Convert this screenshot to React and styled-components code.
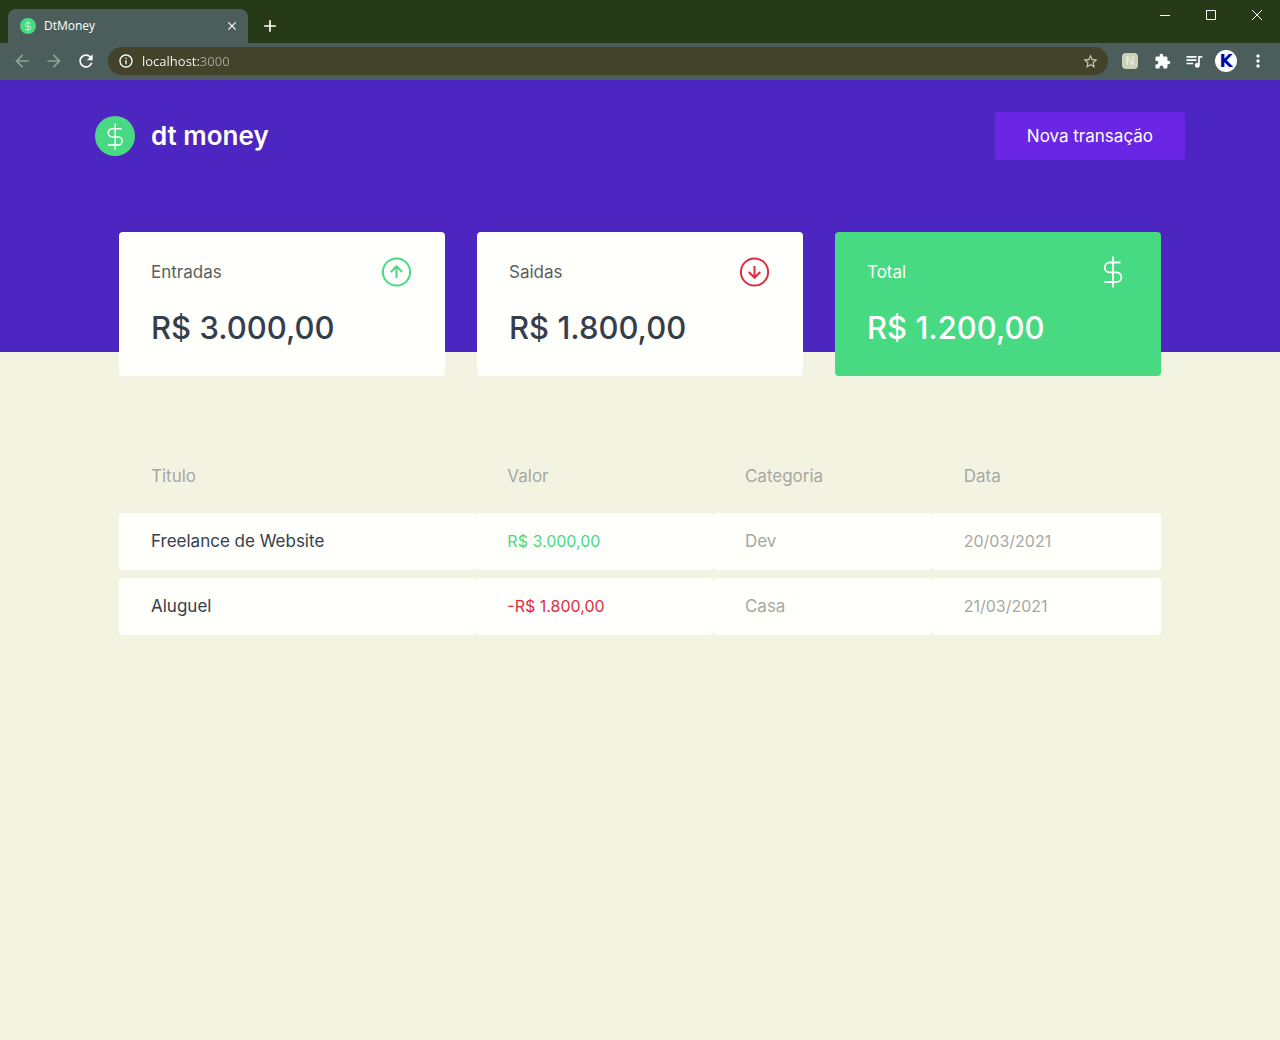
import React from "react";
import styled, { createGlobalStyle } from "styled-components";
import {
  MdArrowBack,
  MdArrowForward,
  MdRefresh,
  MdInfoOutline,
  MdStarBorder,
  MdExtension,
  MdQueueMusic,
  MdMoreVert,
  MdAdd,
  MdClose,
} from "react-icons/md";

const colors = {
  frame: "#263a18",
  toolbar: "#4b5e5c",
  field: "#42432a",
  background: "#f3f3e2",
  header: "#4d25c0",
  button: "#6a26e4",
  green: "#48da82",
  red: "#df2c42",
  title: "#363d4c",
  label: "#5a5e5c",
  muted: "#a6a8a4",
  shape: "#fffffc",
};

const GlobalStyle = createGlobalStyle`
  * { box-sizing: border-box; margin: 0; padding: 0; }
  body {
    background: ${colors.background};
    font-family: Inter, "Open Sans", sans-serif;
    font-size: 17px;
    -webkit-font-smoothing: antialiased;
  }
  button, input { font: inherit; border: 0; background: none; }
  button { cursor: pointer; }
`;

/* Browser window */

const Chrome = styled.div`
  background: ${colors.frame};
  font-family: "Open Sans", "Noto Sans", sans-serif;
  color: #fff;
`;

const TabStrip = styled.div`
  display: flex;
  align-items: flex-start;
  height: 43px;
  padding-left: 8px;
`;

const Tab = styled.div`
  display: flex;
  align-items: center;
  gap: 8px;
  width: 240px;
  height: 34px;
  margin-top: 9px;
  padding: 0 8px 0 12px;
  border-radius: 8px 8px 0 0;
  background: ${colors.toolbar};
  font-size: 12px;
  line-height: 16px;
`;

const TabTitle = styled.span`
  flex: 1;
`;

const IconButton = styled.button`
  display: flex;
  align-items: center;
  justify-content: center;
  flex: none;
  width: ${(p) => p.$width || 32}px;
  height: ${(p) => p.$height || 28}px;
  color: ${(p) => (p.$dim ? "#93a096" : "#fff")};
`;

const NewTab = styled(IconButton)`
  margin: 12px 0 0 8px;
`;

const WindowControls = styled.div`
  display: flex;
  margin-left: auto;
`;

const Toolbar = styled.div`
  display: flex;
  align-items: center;
  padding: 4px 6px 5px;
  background: ${colors.toolbar};
`;

const AddressBar = styled.label`
  display: flex;
  align-items: center;
  flex: 1;
  gap: 8px;
  height: 28px;
  margin: 0 6px;
  padding: 0 2px 0 10px;
  border-radius: 14px;
  background: ${colors.field};
`;

const AddressInput = styled.input`
  flex: 1;
  min-width: 0;
  height: 28px;
  font-size: 13px;
  line-height: 20px;
  outline: 0;
  color: #fff;
  background: linear-gradient(90deg, #fff 58px, #a3a59b 58px);
  background-clip: text;
  -webkit-background-clip: text;
  -webkit-text-fill-color: transparent;
`;

const Extension = styled.span`
  display: flex;
  align-items: center;
  justify-content: center;
  width: 16px;
  height: 16px;
  border-radius: 4px;
  background: #cfd0b8;
  color: #f4f4e6;
  font-size: 12px;
  line-height: 16px;
`;

const Avatar = styled.span`
  display: flex;
  align-items: center;
  justify-content: center;
  width: 22px;
  height: 22px;
  border-radius: 50%;
  background: #fff;
  color: #0505a8;
  font-family: "DejaVu Sans", sans-serif;
  font-size: 17px;
  font-weight: 700;
  line-height: 22px;
`;

/* Page */

const Header = styled.header`
  background: ${colors.header};
`;

const HeaderContent = styled.div`
  display: flex;
  align-items: center;
  justify-content: space-between;
  max-width: 1122px;
  margin: 0 auto;
  padding: 32px 16px 192px;
`;

const Brand = styled.h1`
  display: flex;
  align-items: center;
  gap: 16px;
  color: #fff;
  font-size: 26px;
  font-weight: 600;
  line-height: 40px;
`;

const NewTransaction = styled.button`
  height: 48px;
  padding: 0 32px;
  border-radius: 4px;
  background: ${colors.button};
  color: #fff;
  line-height: 24px;
`;

const Main = styled.main`
  max-width: 1122px;
  margin: 0 auto;
  padding: 0 40px 40px;
`;

const Summary = styled.section`
  display: grid;
  grid-template-columns: repeat(3, 1fr);
  gap: 32px;
  margin-top: -120px;
`;

const Card = styled.article`
  padding: 24px 32px;
  border-radius: 4px;
  background: ${(p) => (p.$highlight ? colors.green : colors.shape)};
  color: ${(p) => (p.$highlight ? "#fff" : colors.title)};
`;

const CardHeader = styled.header`
  display: flex;
  align-items: center;
  justify-content: space-between;
  line-height: 32px;
  color: ${(p) => (p.$highlight ? "#fff" : colors.label)};
`;

const Amount = styled.strong`
  display: block;
  margin-top: 16px;
  font-size: 31px;
  font-weight: 500;
  line-height: 48px;
`;

const Table = styled.table`
  width: 100%;
  margin-top: 64px;
  table-layout: fixed;
  border-spacing: 0 8px;
  line-height: 25px;
  text-align: left;
`;

const Column = styled.col`
  width: ${(p) => p.$share}%;
`;

const Th = styled.th`
  padding: 16px 32px;
  color: ${colors.muted};
  font-weight: 400;
`;

const tones = {
  title: colors.title,
  deposit: colors.green,
  withdraw: colors.red,
  muted: colors.muted,
};

const Td = styled.td`
  padding: 16px 32px;
  border-radius: 4px;
  background: ${colors.shape};
  color: ${(p) => tones[p.$tone]};
  font-size: ${(p) => (p.$numeric ? 16 : 17)}px;
`;

function Dollar() {
  return (
    <g fill="none" stroke="#fff" strokeWidth="1.8">
      <path d="M23.5 6.5H12.6a4.9 4.9 0 0 0 0 9.8h6.8a4.9 4.9 0 0 1 0 9.8H7.2" />
      <path d="M16 0.5v31" />
    </g>
  );
}

function Logo({ size }) {
  return (
    <svg width={size} height={size} viewBox="0 0 40 40" aria-hidden="true">
      <circle cx="20" cy="20" r="20" fill={colors.green} />
      <g transform="translate(6.8 7.2) scale(0.84)">
        <Dollar />
      </g>
    </svg>
  );
}

function ArrowCircle({ down }) {
  return (
    <svg
      width="32"
      height="32"
      viewBox="0 0 32 32"
      fill="none"
      stroke={down ? colors.red : colors.green}
      strokeWidth="2"
      aria-hidden="true"
    >
      <circle cx="15.5" cy="16" r="13.6" />
      <path
        strokeLinejoin="round"
        d={down ? "M15.5 10v12M9.8 16l5.7 5.8 5.7-5.8" : "M15.5 22V10M9.8 16l5.7-5.8 5.7 5.8"}
      />
    </svg>
  );
}

const cards = [
  { label: "Entradas", value: "R$ 3.000,00", icon: <ArrowCircle /> },
  { label: "Saidas", value: "R$ 1.800,00", icon: <ArrowCircle down /> },
  {
    label: "Total",
    value: "R$ 1.200,00",
    highlight: true,
    icon: (
      <svg width="32" height="32" viewBox="0 0 32 32" aria-hidden="true">
        <Dollar />
      </svg>
    ),
  },
];

const transactions = [
  { title: "Freelance de Website", value: "R$ 3.000,00", type: "deposit", category: "Dev", date: "20/03/2021" },
  { title: "Aluguel", value: "-R$ 1.800,00", type: "withdraw", category: "Casa", date: "21/03/2021" },
];

function BrowserChrome() {
  return (
    <Chrome>
      <TabStrip>
        <Tab>
          <Logo size={16} />
          <TabTitle>DtMoney</TabTitle>
          <IconButton $width={16} $height={16} aria-label="Fechar guia">
            <MdClose size={14} />
          </IconButton>
        </Tab>
        <NewTab $width={28} aria-label="Nova guia">
          <MdAdd size={20} />
        </NewTab>
        <WindowControls>
          <IconButton $width={46} $height={30} aria-label="Minimizar">
            <svg width="10" height="10" stroke="#fff"><path d="M0 5.5h10" /></svg>
          </IconButton>
          <IconButton $width={46} $height={30} aria-label="Maximizar">
            <svg width="10" height="10" stroke="#fff" fill="none"><path d="M.5.5h9v9h-9z" /></svg>
          </IconButton>
          <IconButton $width={46} $height={30} aria-label="Fechar">
            <svg width="10" height="10" stroke="#fff"><path d="M0 0l10 10M10 0L0 10" /></svg>
          </IconButton>
        </WindowControls>
      </TabStrip>
      <Toolbar>
        <IconButton $dim aria-label="Voltar"><MdArrowBack size={20} /></IconButton>
        <IconButton $dim aria-label="Avançar"><MdArrowForward size={20} /></IconButton>
        <IconButton aria-label="Recarregar"><MdRefresh size={20} /></IconButton>
        <AddressBar>
          <MdInfoOutline size={16} />
          <AddressInput type="text" aria-label="Endereço" defaultValue="localhost:3000" />
          <IconButton aria-label="Favoritar"><MdStarBorder size={17} color="#c9cbc0" /></IconButton>
        </AddressBar>
        <IconButton aria-label="Extensão"><Extension>N</Extension></IconButton>
        <IconButton aria-label="Extensões"><MdExtension size={17} /></IconButton>
        <IconButton aria-label="Mídia"><MdQueueMusic size={20} /></IconButton>
        <IconButton aria-label="Perfil"><Avatar>K</Avatar></IconButton>
        <IconButton aria-label="Menu"><MdMoreVert size={20} /></IconButton>
      </Toolbar>
    </Chrome>
  );
}

export default function App() {
  return (
    <>
      <GlobalStyle />
      <BrowserChrome />
      <Header>
        <HeaderContent>
          <Brand>
            <Logo size={40} />
            dt money
          </Brand>
          <NewTransaction type="button">Nova transação</NewTransaction>
        </HeaderContent>
      </Header>
      <Main>
        <Summary>
          {cards.map((card) => (
            <Card key={card.label} $highlight={card.highlight}>
              <CardHeader $highlight={card.highlight}>
                <p>{card.label}</p>
                {card.icon}
              </CardHeader>
              <Amount>{card.value}</Amount>
            </Card>
          ))}
        </Summary>
        <Table>
          <colgroup>
            <Column $share={34.2} />
            <Column $share={22.8} />
            <Column $share={21} />
            <Column $share={22} />
          </colgroup>
          <thead>
            <tr>
              <Th>Titulo</Th>
              <Th>Valor</Th>
              <Th>Categoria</Th>
              <Th>Data</Th>
            </tr>
          </thead>
          <tbody>
            {transactions.map((t) => (
              <tr key={t.title}>
                <Td $tone="title">{t.title}</Td>
                <Td $tone={t.type} $numeric>{t.value}</Td>
                <Td $tone="muted">{t.category}</Td>
                <Td $tone="muted" $numeric>{t.date}</Td>
              </tr>
            ))}
          </tbody>
        </Table>
      </Main>
    </>
  );
}
